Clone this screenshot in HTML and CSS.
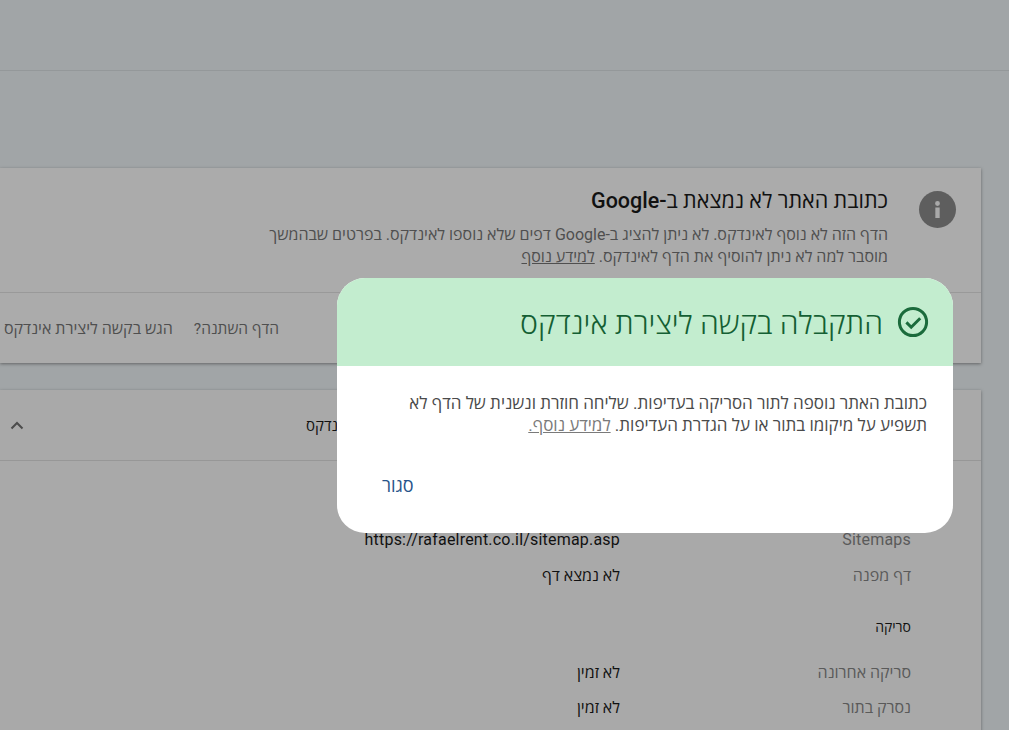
FILE: index.html
```html
<!DOCTYPE html>
<html lang="he" dir="rtl">
<head>
<meta charset="utf-8">
<title>בדיקת כתובת אתר</title>
<link rel="stylesheet" href="styles.css">
</head>
<body>
<header class="topbar"></header>
<main class="content">
  <section class="card status-card">
    <div class="status-main">
      <div class="info-icon">
        <svg viewBox="0 0 24 24" width="29" height="29"><path d="M10.2 10.4h3.6V19h-3.6zM12 5a2 2 0 1 1 0 4 2 2 0 0 1 0-4z" fill="#a9a9a9"/></svg>
      </div>
      <div class="status-text">
        <h1 class="status-title">כתובת האתר לא נמצאת ב-Google</h1>
        <p class="status-desc">הדף הזה לא נוסף לאינדקס. לא ניתן להציג ב-Google דפים שלא נוספו לאינדקס. בפרטים שבהמשך<br>מוסבר למה לא ניתן להוסיף את הדף לאינדקס. <a class="link" href="#">למידע נוסף</a></p>
      </div>
    </div>
    <div class="status-actions">
      <span class="action action-question">הדף השתנה?</span>
      <span class="action">הגש בקשה ליצירת אינדקס</span>
    </div>
  </section>

  <section class="card details-card">
    <div class="details-head">
      <span class="details-title">הדף לא נוסף לאינדקס</span>
      <svg class="chevron" viewBox="0 0 24 24" width="24" height="24"><path d="M6.5 15.5 12 10l5.5 5.5" fill="none" stroke="#4c4c4c" stroke-width="2"/></svg>
    </div>
    <div class="details-body">
      <div class="row"><span class="label latin">Sitemaps</span><span class="value latin">https://rafaelrent.co.il/sitemap.asp</span></div>
      <div class="row"><span class="label">דף מפנה</span><span class="value">לא נמצא דף</span></div>
      <div class="section-label">סריקה</div>
      <div class="row"><span class="label">סריקה אחרונה</span><span class="value">לא זמין</span></div>
      <div class="row"><span class="label">נסרק בתור</span><span class="value">לא זמין</span></div>
    </div>
  </section>
</main>

<div class="dialog" role="dialog">
  <div class="dialog-head">
    <svg class="check" viewBox="0 0 32 32" width="32" height="32"><circle cx="16" cy="16" r="13.6" fill="none" stroke="#1b6b3c" stroke-width="3"/><path d="M9.4 16.4l4.8 4.8 9-9" fill="none" stroke="#1b6b3c" stroke-width="3"/></svg>
    <h2 class="dialog-title">התקבלה בקשה ליצירת אינדקס</h2>
  </div>
  <div class="dialog-body">
    <p class="dialog-text">כתובת האתר נוספה לתור הסריקה בעדיפות. שליחה חוזרת ונשנית של הדף לא<br>תשפיע על מיקומו בתור או על הגדרת העדיפות. <a class="dialog-link" href="#">למידע נוסף.</a></p>
    <div class="dialog-actions"><button class="close-btn" type="button">סגור</button></div>
  </div>
</div>
</body>
</html>
```

FILE: styles.css
```css
* { box-sizing: border-box; }
html, body { height: 100%; }
body {
  margin: 0;
  height: 730px;
  overflow: hidden;
  position: relative;
  background: #a1a5a7;
  font-family: Roboto, "Open Sans", "Noto Sans", sans-serif;
  color: #141414;
}
.topbar { height: 71px; border-bottom: 1px solid #94989a; }
.content { padding: 97px 28px 0 0; display: flex; flex-direction: column; gap: 27px; }
.card { background: #a9a9a9; box-shadow: 0 1px 3px rgba(50, 50, 50, .55); }
.status-card { background: #ababab; height: 195px; display: flex; flex-direction: column; }
.status-main { display: flex; height: 125px; padding: 22px 25px 0 0; gap: 31px; border-bottom: 1px solid #999; }
.info-icon { width: 37px; height: 37px; margin-top: 1px; border-radius: 50%; background: #5e5e5e; display: flex; align-items: center; justify-content: center; flex: none; }
.status-title { margin: 0; font-size: 21.5px; font-weight: 500; line-height: 22px; color: #111; }
.status-desc { margin: 12px 0 0; font-size: 16px; line-height: 22px; color: #4f4f4f; }
.link { color: inherit; text-decoration: underline; }
.status-actions { flex: 1; display: flex; justify-content: flex-end; align-items: center; gap: 21px; padding-left: 4px; }
.action { font-size: 16px; color: #4f4f4f; }
.action-question { font-size: 15.5px; }
.details-head { height: 71px; display: flex; align-items: center; justify-content: flex-end; padding-left: 5px; border-bottom: 1px solid #979797; }
.details-title { margin-left: 277px; font-size: 15px; color: #111; }
.chevron { flex: none; }
.details-body { padding: 61px 70px 40px 0; }
.row { display: grid; grid-template-columns: 291px 1fr; height: 35px; align-items: center; font-size: 16px; }
.label { color: #5a5a5a; }
.value { color: #111; }
.latin { letter-spacing: .2px; }
.section-label { height: 62px; padding-top: 7px; display: flex; align-items: center; font-size: 14px; color: #111; }
.dialog { position: absolute; left: 337px; top: 278px; width: 616px; height: 255px; border-radius: 28px; overflow: hidden; background: #fff; }
.dialog-head { height: 88px; background: #c3edcf; display: flex; align-items: center; gap: 14px; padding: 0 24px 0 0; }
.check { flex: none; }
.dialog-title { margin: 0; font-size: 30.25px; font-weight: 300; color: #145f33; }
.dialog-body { padding: 26px 26px 0 0; }
.dialog-text { margin: 0; font-size: 17px; line-height: 22px; color: #4a4a4a; }
.dialog-link { color: #7a7a7a; text-decoration: underline; }
.dialog-actions { display: flex; justify-content: flex-end; padding: 37px 0 0 45px; }
.close-btn { border: 0; background: none; padding: 0; font: 500 18px Roboto, "Open Sans", "Noto Sans", sans-serif; color: #27548a; }
```
